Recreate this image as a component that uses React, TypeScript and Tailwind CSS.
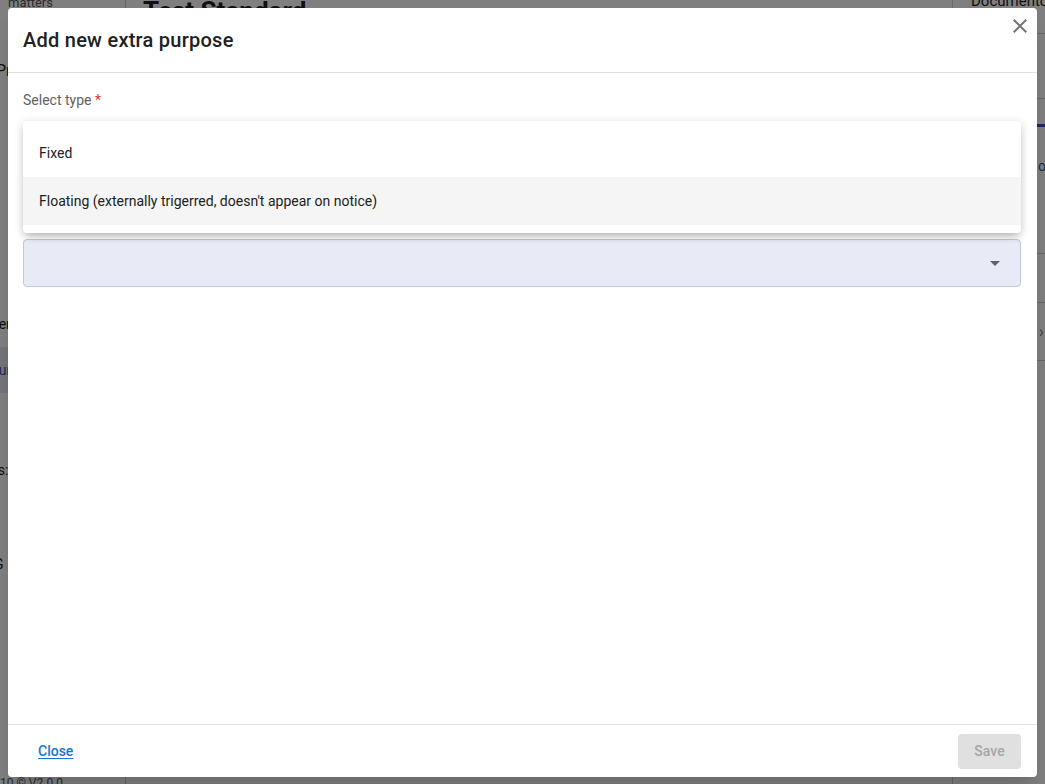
import React from 'react';

const font = { fontFamily: 'Roboto, "Liberation Sans", sans-serif' };

const options = [
    { id: 'fixed', label: 'Fixed' },
    { id: 'floating', label: "Floating (externally trigerred, doesn't appear on notice)" },
];

const BackgroundPage = () => (
    <div className="flex h-[784px] w-full bg-white text-[#212121]">
        <aside className="w-[126px] shrink-0 border-r border-[#d0d0d0] flex flex-col text-sm">
            <div className="pl-2 -mt-[6px] text-[13px] text-[#555]">matters</div>
            <div className="mt-[46px] text-base -ml-[4px]">Proc</div>
            <div className="mt-[231px] -ml-[10px]">Renc</div>
            <div className="mt-[13px] h-[46px] bg-[#e8eaf6] flex items-center -ml-[10px] text-[#3f51b5]">Purp</div>
            <div className="mt-[67px] -ml-[6px]">Is:</div>
            <div className="mt-[74px] -ml-[6px]">G</div>
            <div className="mt-auto mb-[-8px] text-[12px] text-[#555]">10 © V2.0.0</div>
        </aside>
        <main className="flex-1 flex flex-col">
            <div className="pl-[17px] -mt-[8px] text-[26px] font-bold">Test Standard</div>
        </main>
        <aside className="w-[93px] shrink-0 border-l border-[#d0d0d0] flex flex-col">
            <div className="h-[42px] border-b border-[#d0d0d0] pl-[18px] -mt-[8px] text-[15px] leading-[18px]">Documento</div>
            <div className="h-[65px] border-b border-[#d0d0d0]" />
            <div className="h-[25px]" />
            <div className="h-[3px] bg-[#3f51b5]" />
            <div className="h-[29px]" />
            <div className="pl-[85px] text-[#3f51b5] text-sm leading-[20px]">o</div>
            <div className="h-[78px] border-b border-[#d0d0d0]" />
            <div className="h-[49px] border-b border-[#d0d0d0]" />
            <div className="h-[58px] border-b border-[#d0d0d0] flex items-center pl-[86px] text-[#777]">›</div>
        </aside>
    </div>
);

export default function App() {
    return (
        <div className="relative w-[1045px] h-[784px] overflow-hidden" style={font}>
            <BackgroundPage />
            <div className="absolute inset-0 bg-black/50 p-2">
                <div className="relative h-[769px] w-[1029px] bg-white rounded flex flex-col shadow-xl">
                    <header className="h-[65px] shrink-0 flex items-center px-[15px] border-b border-[#e0e0e0]">
                        <h2 className="text-xl font-medium text-[#212121] tracking-[0.25px]">Add new extra purpose</h2>
                    </header>
                    <button className="absolute top-[6px] right-[5px] w-6 h-6 flex items-center justify-center" aria-label="close">
                        <svg width="24" height="24" viewBox="0 0 24 24">
                            <path fill="#757575" d="M19 6.41 17.59 5 12 10.59 6.41 5 5 6.41 10.59 12 5 17.59 6.41 19 12 13.41 17.59 19 19 17.59 13.41 12z" />
                        </svg>
                    </button>

                    <section className="relative flex-1 px-[15px] pt-[18px]">
                        <label className="block text-sm text-[#616161] leading-[18px]">
                            Select type <span className="text-[#e53935]">*</span>
                        </label>
                        <div className="mt-[130px] h-12 w-[998px] rounded border border-[#c3c7d8] bg-[#e8eaf6] flex items-center justify-end pr-[13px]">
                            <svg width="24" height="24" viewBox="0 0 24 24">
                                <path fill="#616161" d="M7 10l5 5 5-5z" />
                            </svg>
                        </div>

                        <ul className="absolute left-[15px] top-[48px] w-[998px] bg-white rounded py-2 shadow-[0_5px_8px_-3px_rgba(0,0,0,0.25),0_2px_10px_1px_rgba(0,0,0,0.12)]">
                            {options.map(opt => (
                                <li
                                    key={opt.id}
                                    className={`h-12 flex items-center px-4 text-sm text-[#212121] ${opt.id === 'floating' ? 'bg-[#f5f5f5]' : ''}`}
                                >
                                    {opt.label}
                                </li>
                            ))}
                        </ul>
                    </section>

                    <footer className="h-[53px] shrink-0 border-t border-[#e0e0e0] flex items-center justify-between pl-[30px] pr-[16px]">
                        <a href="#" className="text-sm font-medium text-[#1976d2] underline underline-offset-2">Close</a>
                        <button disabled className="h-[35px] w-[63px] rounded bg-[#e0e0e0] text-sm font-medium text-[#a6a6a6]">Save</button>
                    </footer>
                </div>
            </div>
        </div>
    );
}
